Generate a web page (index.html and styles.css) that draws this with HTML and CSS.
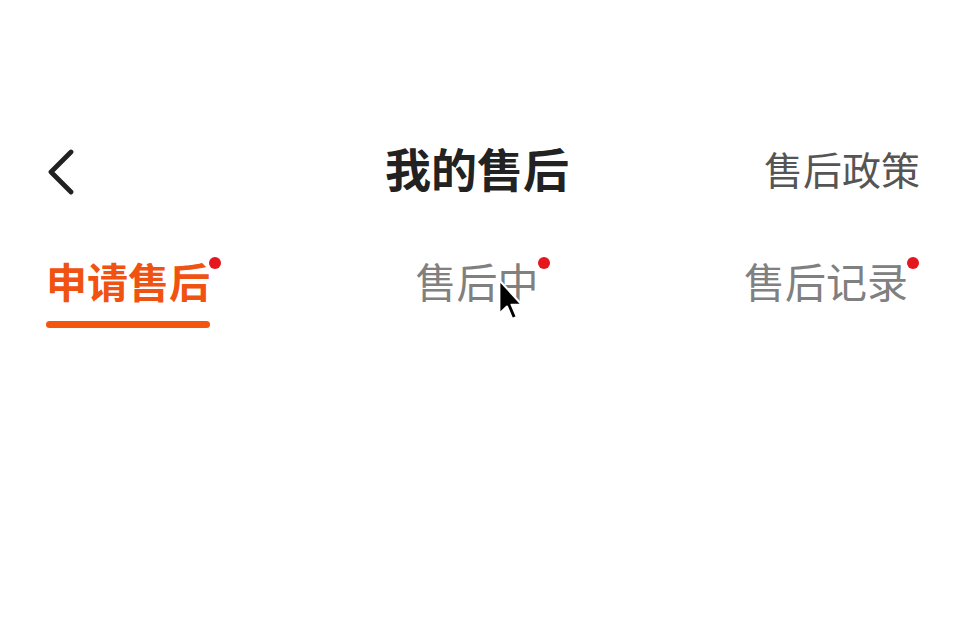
FILE: index.html
```html
<!DOCTYPE html>
<html lang="zh-CN">
<head>
<meta charset="utf-8">
<title>我的售后</title>
<link rel="stylesheet" href="styles.css">
</head>
<body>
<div class="page">
  <header class="navbar">
    <div class="nav-left">
      <svg class="back" width="30" height="46" viewBox="0 0 30 46">
        <polyline points="25,3 5,23 25,43" fill="none" stroke="#222" stroke-width="4.8" stroke-linecap="round" stroke-linejoin="round"/>
      </svg>
    </div>
    <h1 class="title">我的售后</h1>
    <div class="nav-right">售后政策</div>
  </header>

  <nav class="tabs">
    <div class="tab active">
      <span class="label">申请售后<i class="dot"></i></span>
      <span class="bar"></span>
    </div>
    <div class="tab">
      <span class="label">售后中<i class="dot"></i></span>
    </div>
    <div class="tab">
      <span class="label">售后记录<i class="dot"></i></span>
    </div>
  </nav>

  <svg class="cursor" width="30" height="46" viewBox="0 0 13 20">
    <path d="M1 1 L1 15.5 L4.3 12.4 L6.6 17.8 L8.6 16.9 L6.3 11.6 L10.8 11.6 Z" fill="#000" stroke="#fff" stroke-width="0.9" stroke-linejoin="round"/>
  </svg>
</div>
</body>
</html>
```

FILE: styles.css
```css
html, body {
  margin: 0;
  padding: 0;
  background: #fff;
}

body {
  font-family: "Noto Sans CJK SC", "Noto Sans", sans-serif;
  color: #222;
}

.page {
  position: relative;
  width: 960px;
  height: 640px;
  overflow: hidden;
}

.navbar {
  margin-top: 140px;
  height: 64px;
  padding: 0 40px 0 46px;
  display: grid;
  grid-template-columns: 1fr auto 1fr;
  align-items: center;
}

.nav-left {
  display: flex;
  align-items: center;
}

.back {
  display: block;
}

.title {
  margin: 0 12px 0 0;
  padding-bottom: 10px;
  font-size: 46px;
  line-height: 54px;
  font-weight: 700;
  color: #222;
}

.nav-right {
  justify-self: end;
  padding-bottom: 8px;
  font-size: 39px;
  line-height: 56px;
  color: #555;
}

.tabs {
  margin-top: 52px;
  padding: 0 52px 0 46px;
  display: flex;
  justify-content: space-between;
  align-items: flex-start;
}

.tab {
  display: flex;
  flex-direction: column;
  align-items: stretch;
}

.label {
  position: relative;
  font-size: 41px;
  line-height: 48px;
  color: #808080;
  white-space: nowrap;
}

.tab.active .label {
  color: #f05211;
  font-weight: 700;
}

.dot {
  position: absolute;
  right: -11px;
  top: 1px;
  width: 12px;
  height: 12px;
  border-radius: 50%;
  background: #e5161d;
}

.bar {
  margin-top: 17px;
  height: 7px;
  border-radius: 4px;
  background: #f4560f;
}

.cursor {
  position: absolute;
  left: 497px;
  top: 278px;
}
```
